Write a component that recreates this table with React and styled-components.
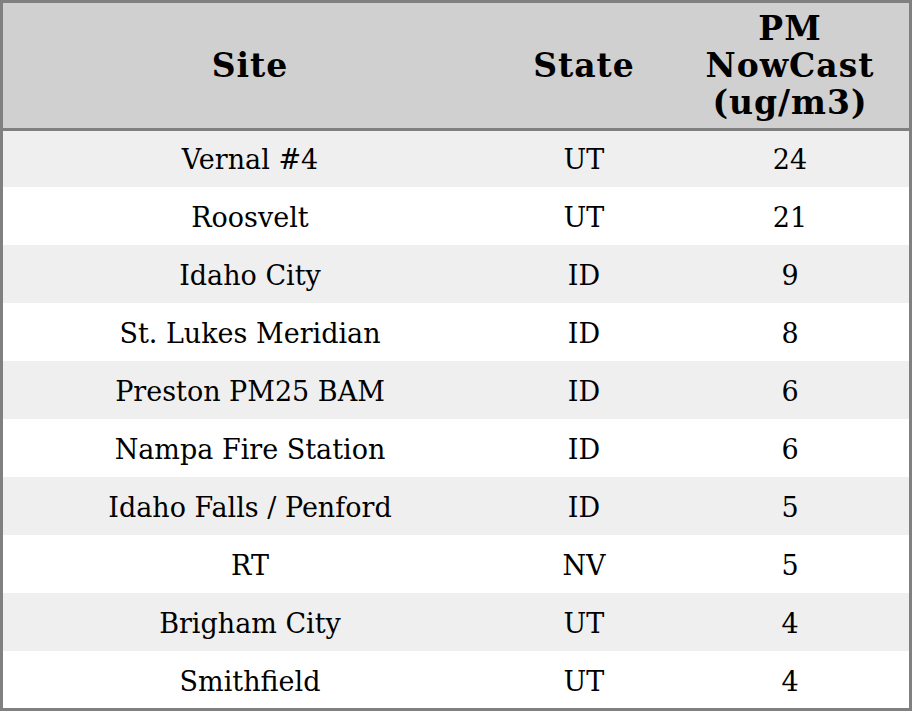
import React from "react";
import styled, { createGlobalStyle } from "styled-components";

const rows = [
  { site: "Vernal #4", state: "UT", pm: 24 },
  { site: "Roosvelt", state: "UT", pm: 21 },
  { site: "Idaho City", state: "ID", pm: 9 },
  { site: "St. Lukes Meridian", state: "ID", pm: 8 },
  { site: "Preston PM25 BAM", state: "ID", pm: 6 },
  { site: "Nampa Fire Station", state: "ID", pm: 6 },
  { site: "Idaho Falls / Penford", state: "ID", pm: 5 },
  { site: "RT", state: "NV", pm: 5 },
  { site: "Brigham City", state: "UT", pm: 4 },
  { site: "Smithfield", state: "UT", pm: 4 },
];

const GlobalStyle = createGlobalStyle`
  html, body {
    margin: 0;
    padding: 0;
    background: #ffffff;
  }
`;

const Frame = styled.div`
  box-sizing: border-box;
  width: 912px;
  height: 711px;
  border: 3px solid #808080;
  overflow: hidden;
`;

const Table = styled.table`
  width: 100%;
  border-collapse: collapse;
  border-spacing: 0;
  table-layout: fixed;
  font-family: "DejaVu Serif", serif;
  color: #000;
`;

const HeadCell = styled.th`
  box-sizing: border-box;
  background: #d0d0d0;
  font-size: 33px;
  font-weight: bold;
  letter-spacing: 1px;
  line-height: 37px;
  height: 126px;
  padding: 5px 4px 5px;
  text-align: center;
  vertical-align: middle;
  border-bottom: 3px solid #808080;
  width: ${(p) => p.$w}px;
`;

const Row = styled.tr`
  background: ${(p) => (p.$odd ? "#efefef" : "#ffffff")};
`;

const Cell = styled.td`
  box-sizing: border-box;
  font-size: 27px;
  height: 58px;
  padding: 2px 4px 0;
  text-align: center;
  vertical-align: middle;
`;

export default function App() {
  return (
    <>
      <GlobalStyle />
      <Frame>
        <Table>
          <thead>
            <tr>
              <HeadCell $w={494}>Site</HeadCell>
              <HeadCell $w={174}>State</HeadCell>
              <HeadCell $w={238}>
                PM
                <br />
                NowCast
                <br />
                (ug/m3)
              </HeadCell>
            </tr>
          </thead>
          <tbody>
            {rows.map((r, i) => (
              <Row key={i} $odd={i % 2 === 0}>
                <Cell>{r.site}</Cell>
                <Cell>{r.state}</Cell>
                <Cell>{r.pm}</Cell>
              </Row>
            ))}
          </tbody>
        </Table>
      </Frame>
    </>
  );
}
